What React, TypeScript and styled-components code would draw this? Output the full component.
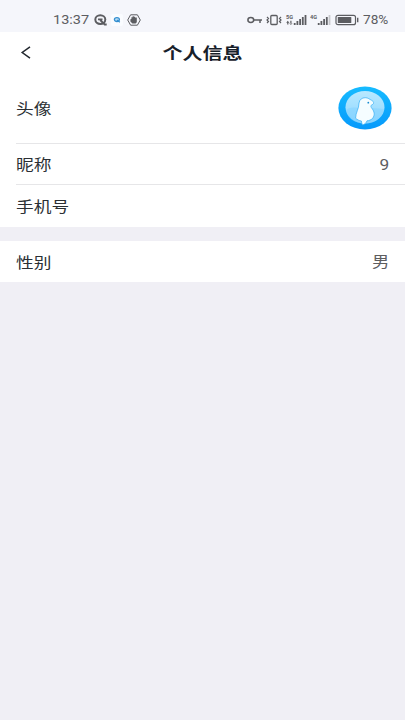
import React from 'react';
import styled, { createGlobalStyle } from 'styled-components';

const Global = createGlobalStyle`
  * { box-sizing: border-box; }
  html, body { margin: 0; background: #f0eff5; }
  body { font-family: Roboto, "Noto Sans CJK SC", sans-serif; }
`;
const Screen = styled.main`
  width: 405px;
  height: 720px;
  background: #f0eff5;
  overflow: hidden;
`;
const StatusBar = styled.div`
  height: 32px;
  display: flex;
  align-items: center;
  justify-content: space-between;
  padding: 8px 16px 0 53px;
  background: #f5f6fb;
  color: #5c5d61;
`;
const StatusGroup = styled.div`
  display: flex;
  align-items: center;
`;
const StatusText = styled.span<{ $width: number; $stretch: number }>`
  width: ${p => p.$width}px;
  font-size: 12.5px;
  line-height: 24px;
  white-space: nowrap;
  transform: scaleX(${p => p.$stretch});
  transform-origin: left center;
`;
const Glyph = styled.svg<{ $gap?: number }>`
  display: block;
  flex: none;
  margin-left: ${p => p.$gap ?? 0}px;
`;
const Header = styled.header`
  height: 41px;
  display: grid;
  grid-template-columns: 60px 1fr 60px;
  align-items: center;
  background: #fff;
`;
const BackButton = styled.button`
  border: 0;
  padding: 0 0 0 20px;
  background: none;
  color: #22282f;
`;
const Title = styled.h1`
  margin: 0;
  padding-top: 2px;
  text-align: center;
  font-size: 16px;
  line-height: 40px;
  font-weight: 700;
  color: #17202a;
  transform: scaleX(1.25);
`;
const Group = styled.section`
  background: #fff;
  & + & { margin-top: 14px; }
`;
const Row = styled.div<{ $height: number; $line?: boolean }>`
  height: ${p => p.$height}px;
  margin-left: 16px;
  padding-right: 16px;
  display: flex;
  align-items: center;
  justify-content: space-between;
  border-bottom: ${p => (p.$line ? '1px solid #e6e6e8' : '0')};
`;
const Label = styled.span`
  padding-top: 4px;
  font-size: 14.4px;
  line-height: 22px;
  color: #2b2f34;
  transform: scaleX(1.23);
  transform-origin: left center;
`;
const Value = styled.span`
  padding-top: 3px;
  font-size: 14.4px;
  line-height: 22px;
  color: #5d5d5f;
  transform: scaleX(1.2);
  transform-origin: right center;
`;
const Avatar = styled.svg`
  display: block;
  margin-right: -3px;
`;

const Signal = ({ label, bars, faded, gap, data }: { label: string; bars: number; faded: number; gap: number; data?: boolean }) => (
  <Glyph $gap={gap} width="21" height="12" viewBox="0 0 21 12" fill="currentColor">
    <text x="0" y="4.8" fontSize="5.6" fontWeight="700" textLength="7">{label}</text>
    {data && <path d="M1.2 7.5h1.2v3H1.2zM.2 8.7l1.6-2 1.6 2zM4.3 6.7h1.2v3H4.3zM3.3 9l1.6 2 1.6-2z" />}
    {Array.from({ length: bars }, (_, i) => {
      const h = [2, 4, 6, 8, 10][i];
      return <rect key={i} x={7.8 + i * 2.7} y={11 - h} width="1.8" height={h} opacity={i >= bars - faded ? 0.3 : 1} />;
    })}
  </Glyph>
);

export default function App() {
  return (
    <>
      <Global />
      <Screen>
        <StatusBar>
          <StatusGroup>
            <StatusText $width={41} $stretch={1.16}>13:37</StatusText>
            <Glyph width="13" height="12" viewBox="0 0 13 12" fill="none" stroke="currentColor">
              <ellipse cx="6.3" cy="5.6" rx="5" ry="4.3" strokeWidth="2" />
              <path d="M4 5.3h4.5M6.2 6l4.5 4.5h2" strokeWidth="1.8" />
            </Glyph>
            <Glyph $gap={4} width="12" height="12" viewBox="0 0 12 12">
              <rect width="12" height="12" rx="2" fill="#fafcff" />
              <ellipse cx="5.9" cy="5.6" rx="2.5" ry="1.9" fill="#b9dcf3" stroke="#348fd0" strokeWidth="1.3" />
              <path d="M6 6l2.8 2.3" stroke="#348fd0" strokeWidth="1.2" />
            </Glyph>
            <Glyph $gap={4} width="14" height="12" viewBox="0 0 14 12">
              <path d="M3.6.8h6.8L13.3 6l-2.9 5.2H3.6L.7 6z" fill="none" stroke="currentColor" />
              <path d="M3.4 5.3l1-.3V3.2h1.2v-1h1.2v.6H8v.7h1.8v4.7L8.6 9.6H5.4L3.4 7.4z" fill="currentColor" />
            </Glyph>
          </StatusGroup>
          <StatusGroup>
            <Glyph width="16" height="10" viewBox="0 0 16 10" fill="none" stroke="currentColor" strokeWidth="1.5">
              <ellipse cx="3.8" cy="5" rx="2.9" ry="2.4" />
              <path d="M6.7 5H15M13 5v3" />
            </Glyph>
            <Glyph $gap={3} width="17" height="12" viewBox="0 0 17 12" fill="none" stroke="currentColor">
              <rect x="4.8" y="1.5" width="6.4" height="9" rx="1" strokeWidth="1.3" />
              <path d="M1 3l1.5 1.5L1 6l1.5 1.5L1 9M15 3l-1.5 1.5L15 6l-1.5 1.5L15 9" strokeWidth="1.2" />
            </Glyph>
            <Signal label="5G" bars={5} faded={0} gap={3} data />
            <Signal label="4G" bars={5} faded={1} gap={3} />
            <Glyph $gap={4} width="28" height="12" viewBox="0 0 28 12">
              <rect x="1" y="1.3" width="19.5" height="9.4" rx="2" fill="none" stroke="currentColor" strokeWidth="1.2" />
              <rect x="2.8" y="3" width="13.5" height="6" rx=".6" fill="currentColor" />
              <path d="M22.7 3.8v4.4" stroke="currentColor" strokeWidth="1.4" />
            </Glyph>
            <StatusText $width={26} $stretch={1.09}>78%</StatusText>
          </StatusGroup>
        </StatusBar>

        <Header>
          <BackButton aria-label="返回">
            <Glyph width="12" height="14" viewBox="0 0 12 14" fill="none" stroke="currentColor" strokeWidth="1.5">
              <path d="M10 .8L2.2 6.5l7.8 5.7" />
            </Glyph>
          </BackButton>
          <Title>个人信息</Title>
        </Header>

        <Group>
          <Row $height={71} $line>
            <Label>头像</Label>
            <Avatar width="54" height="44" viewBox="0 0 54 44">
              <defs>
                <linearGradient id="ring" x1="0" y1="0" x2="0" y2="1">
                  <stop offset="0" stopColor="#16bbff" />
                  <stop offset="1" stopColor="#0699fb" />
                </linearGradient>
                <linearGradient id="pool" x1="0" y1="0" x2="0" y2="1">
                  <stop offset="0" stopColor="#b8e9ff" />
                  <stop offset="1" stopColor="#8ed6ff" />
                </linearGradient>
              </defs>
              <ellipse cx="27" cy="22" rx="26.6" ry="21.4" fill="url(#ring)" />
              <ellipse cx="27" cy="21.2" rx="19.5" ry="16.2" fill="url(#pool)" />
              <path d="M8 24c5-3 9-3 14-1l12-1 12 1c-1 8-8 14.4-19 14.4S9 32 8 24z" fill="#80d1ff" opacity=".5" />
              <path d="M21 17c.6-3.6 3-5.3 6.2-5.3 3 0 4.3 1.6 6.4 2.6 2.2 1.1 2.8 3.1.8 4.3-2.2.8-1.8 2.2-.3 4.1 2.2 2.8 3 6 .6 9.6-1.8 1.7-3.6 2.3-5.7 2.5-.8 2-2.2 3.6-4.4 4.2-.8-1.2-1.1-2.6-1.2-4-2.2-.4-4.2-1.3-5.8-2.8C17.6 26.4 21 23 21 17z" fill="#f5fdff" stroke="#35adf4" strokeWidth=".7" />
              <circle cx="30.3" cy="16.7" r=".9" fill="#168bd0" />
            </Avatar>
          </Row>
          <Row $height={41} $line><Label>昵称</Label><Value>9</Value></Row>
          <Row $height={42}><Label>手机号</Label></Row>
        </Group>
        <Group>
          <Row $height={41}><Label>性别</Label><Value>男</Value></Row>
        </Group>
      </Screen>
    </>
  );
}
